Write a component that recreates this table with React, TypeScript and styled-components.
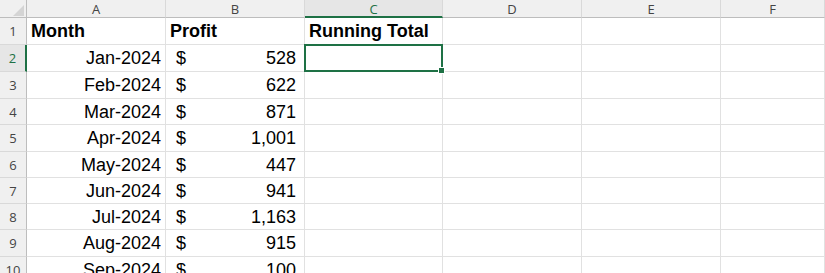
import styled, { createGlobalStyle } from 'styled-components';

const GlobalStyle = createGlobalStyle`
  html, body {
    margin: 0;
    padding: 0;
    background: #ffffff;
    overflow: hidden;
  }
`;

const GREEN = '#1e7145';

const Sheet = styled.div`
  display: grid;
  grid-template-columns: 27px 139px 139px 138px 139px 139px 1fr;
  grid-template-rows: 18px 27px 27px 27px 26px 27px 26px 26px 26px 27px 27px;
  width: 825px;
  height: 273px;
  overflow: hidden;
  font-family: 'Liberation Sans', Arial, sans-serif;
  color: #000000;
`;

const Corner = styled.div`
  position: relative;
  background: #f0f0f0;
  border-right: 1px solid #bdbdbd;
  border-bottom: 1px solid #bdbdbd;
  &::after {
    content: '';
    position: absolute;
    right: 2px;
    bottom: 1px;
    width: 0;
    height: 0;
    border-left: 11px solid transparent;
    border-bottom: 11px solid #d4d4d4;
  }
`;

const ColHeader = styled.div<{ $active?: boolean }>`
  display: flex;
  align-items: center;
  justify-content: center;
  background: ${(p) => (p.$active ? '#e6e6e6' : '#f0f0f0')};
  border-right: 1px solid #d9d9d9;
  border-bottom: ${(p) => (p.$active ? `2px solid ${GREEN}` : '1px solid #bdbdbd')};
  font-family: 'Open Sans', 'Liberation Sans', sans-serif;
  font-size: 13px;
  color: ${(p) => (p.$active ? GREEN : '#444444')};
  padding-top: 1px;
`;

const RowHeader = styled.div<{ $active?: boolean }>`
  display: flex;
  align-items: center;
  justify-content: center;
  background: ${(p) => (p.$active ? '#e6e6e6' : '#f0f0f0')};
  border-right: ${(p) => (p.$active ? `2px solid ${GREEN}` : '1px solid #bdbdbd')};
  border-bottom: 1px solid #d9d9d9;
  font-family: 'Open Sans', 'Liberation Sans', sans-serif;
  font-size: 13px;
  color: ${(p) => (p.$active ? GREEN : '#444444')};
`;

const Cell = styled.div<{ $align?: 'left' | 'right'; $bold?: boolean }>`
  display: flex;
  align-items: center;
  justify-content: ${(p) => (p.$align === 'right' ? 'flex-end' : 'flex-start')};
  padding: 1px 4px 0 4px;
  border-right: 1px solid #e1e1e1;
  border-bottom: 1px solid #e1e1e1;
  font-size: 18px;
  font-weight: ${(p) => (p.$bold ? 700 : 400)};
  white-space: nowrap;
  overflow: hidden;
`;

const MoneyCell = styled(Cell)`
  justify-content: space-between;
  padding: 1px 8px 0 10px;
`;

const SelectedCell = styled(Cell)`
  position: relative;
  overflow: visible;
  &::after {
    content: '';
    position: absolute;
    top: -1px;
    left: -1px;
    right: -1px;
    bottom: -1px;
    border: 2px solid ${GREEN};
    pointer-events: none;
  }
  &::before {
    content: '';
    position: absolute;
    right: -3px;
    bottom: -3px;
    width: 5px;
    height: 5px;
    background: ${GREEN};
    border: 1px solid #ffffff;
    z-index: 2;
  }
`;

const columns = ['A', 'B', 'C', 'D', 'E', 'F'];

const rows: [string, string][] = [
  ['Jan-2024', '528'],
  ['Feb-2024', '622'],
  ['Mar-2024', '871'],
  ['Apr-2024', '1,001'],
  ['May-2024', '447'],
  ['Jun-2024', '941'],
  ['Jul-2024', '1,163'],
  ['Aug-2024', '915'],
  ['Sep-2024', '100'],
];

const App = () => {
  return (
    <>
      <GlobalStyle />
      <Sheet>
        <Corner />
        {columns.map((c) => (
          <ColHeader key={c} $active={c === 'C'}>
            {c}
          </ColHeader>
        ))}

        <RowHeader>1</RowHeader>
        <Cell $bold>Month</Cell>
        <Cell $bold>Profit</Cell>
        <Cell $bold>Running Total</Cell>
        <Cell />
        <Cell />
        <Cell />

        {rows.map(([month, profit], i) => (
          <div key={month} style={{ display: 'contents' }}>
            <RowHeader $active={i === 0}>{i + 2}</RowHeader>
            <Cell $align="right">{month}</Cell>
            <MoneyCell>
              <span>$</span>
              <span>{profit}</span>
            </MoneyCell>
            {i === 0 ? <SelectedCell /> : <Cell />}
            <Cell />
            <Cell />
            <Cell />
          </div>
        ))}
      </Sheet>
    </>
  );
};

export default App;
